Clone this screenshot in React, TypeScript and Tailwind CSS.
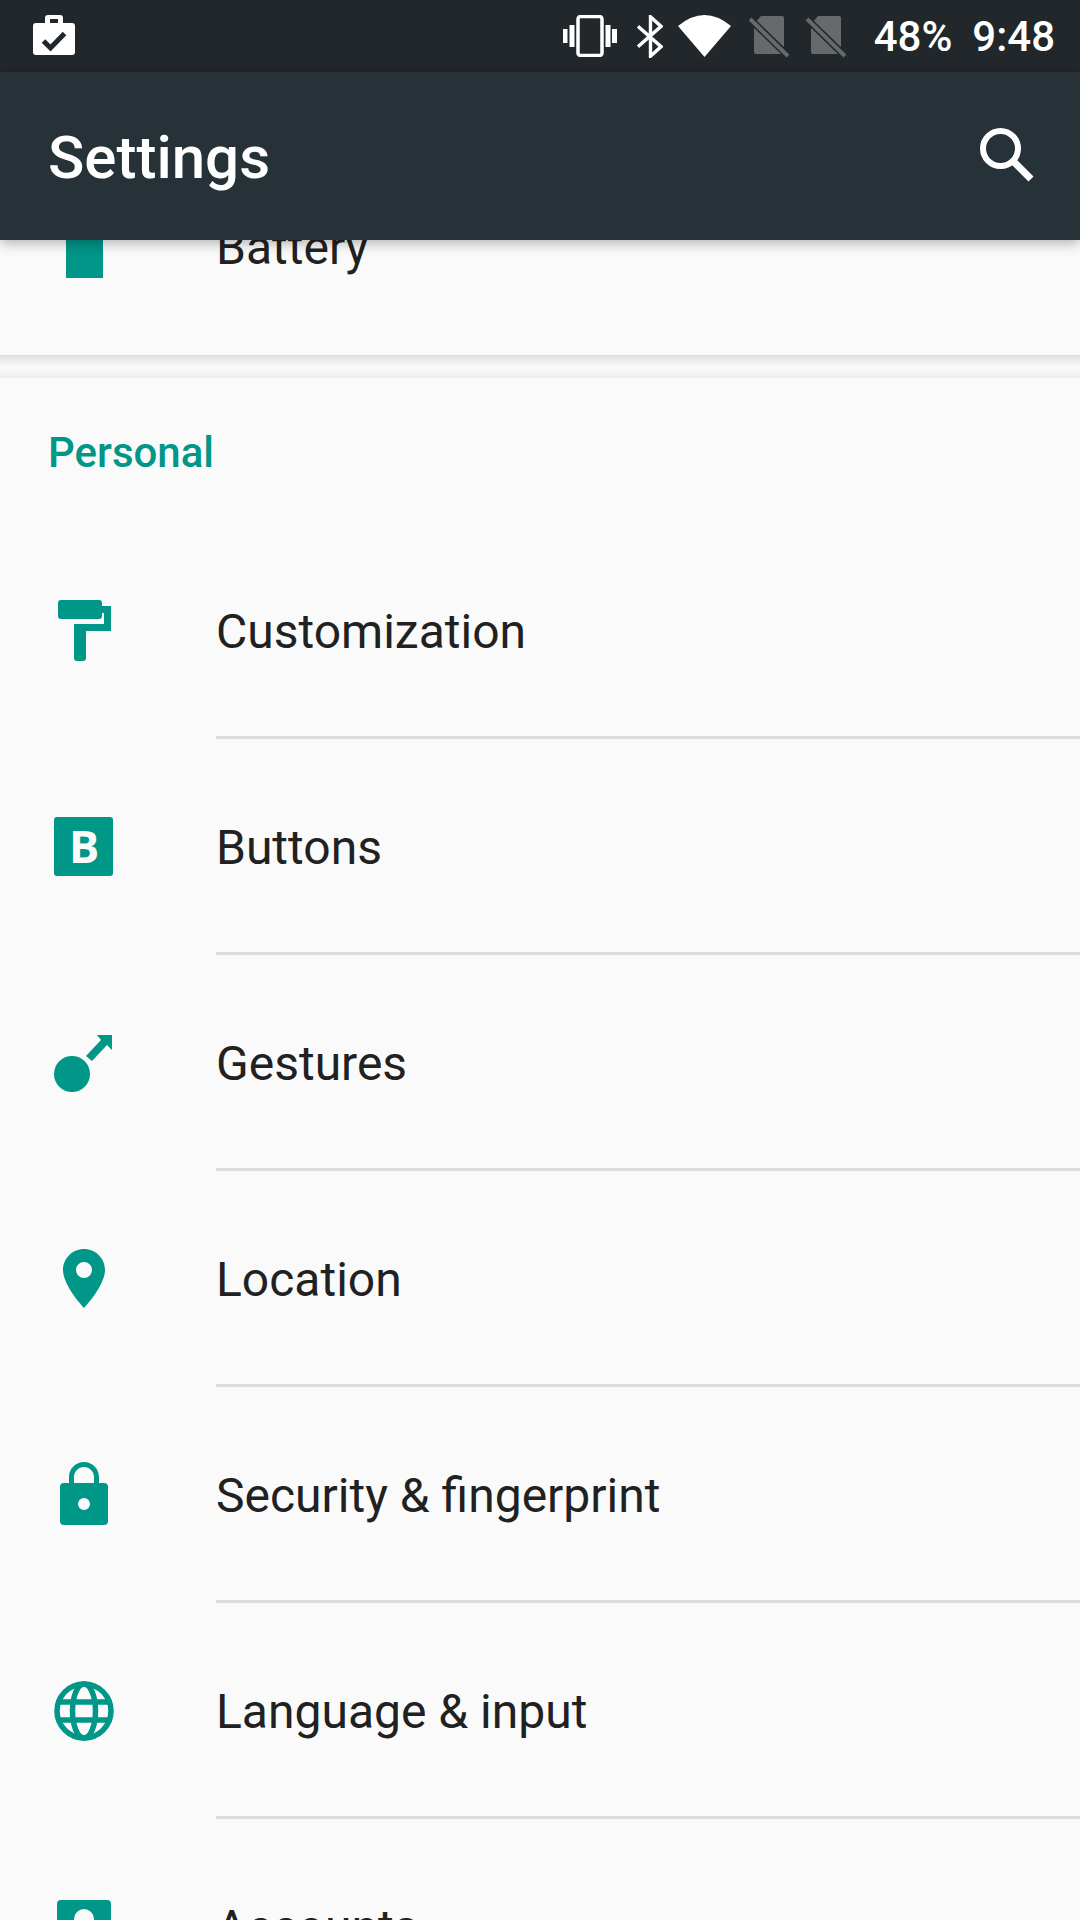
import type { ReactNode } from 'react';

const rows: { label: string; icon: ReactNode }[] = [
  {
    label: 'Customization',
    icon: (
      <>
        <rect x="10" y="6" width="44" height="19" rx="3" />
        <path d="M54 12h9v25H38v27a3 3 0 0 1-3 3h-6a3 3 0 0 1-3-3V30h30V19h-2z" />
      </>
    ),
  },
  {
    label: 'Buttons',
    icon: (
      <>
        <rect x="6" y="7" width="59" height="59" rx="3" />
        <text x="36" y="53" textAnchor="middle" fontSize="45" fontWeight="700" fill="#fafafa" fontFamily="'Open Sans', sans-serif">
          B
        </text>
      </>
    ),
  },
  {
    label: 'Gestures',
    icon: (
      <>
        <circle cx="24" cy="48" r="18" />
        <path d="M49 9h15v15l-5-5-15 16-6-5 15-16z" />
      </>
    ),
  },
  {
    label: 'Location',
    icon: (
      <path
        fillRule="evenodd"
        d="M36 7C24.4 7 15 16.4 15 28c0 15.75 21 38 21 38s21-22.25 21-38C57 16.4 47.6 7 36 7zm0 13a8 8 0 1 1 0 16 8 8 0 0 1 0-16z"
      />
    ),
  },
  {
    label: 'Security & fingerprint',
    icon: (
      <path
        fillRule="evenodd"
        d="M36 4c-8.3 0-15 6.7-15 15v6h-5a4 4 0 0 0-4 4v34a4 4 0 0 0 4 4h40a4 4 0 0 0 4-4V29a4 4 0 0 0-4-4h-5v-6c0-8.3-6.700-15-15-15zm0 5c5.500 0 10 4.500 10 10v6H26v-6c0-5.500 4.500-10 10-10zm0 31a6 6 0 1 1 0 12 6 6 0 0 1 0-12z"
      />
    ),
  },
  {
    label: 'Language & input',
    icon: (
      <g fill="none" stroke="#009688" strokeWidth="5.5">
        <circle cx="36" cy="37" r="27" />
        <ellipse cx="36" cy="37" rx="11.500" ry="27" />
        <path d="M10 28h52M10 46h52" />
      </g>
    ),
  },
  {
    label: 'Accounts',
    icon: (
      <path
        fillRule="evenodd"
        d="M13 10h46a4 4 0 0 1 4 4v46a4 4 0 0 1-4 4H13a4 4 0 0 1-4-4V14a4 4 0 0 1 4-4zm23 9a10 10 0 1 0 0 20 10 10 0 0 0 0-20z"
      />
    ),
  },
];

function SimOff() {
  return (
    <svg width="40" height="43" viewBox="0 0 40 43" fill="#666a6c">
      <path d="M12 1h21a2 2 0 0 1 2 2v34a2 2 0 0 1-2 2H7a2 2 0 0 1-2-2V9z" />
      <path d="M1 4l38 37" stroke="#21272b" strokeWidth="7" />
      <path d="M1 4l38 37" stroke="#666a6c" strokeWidth="4" />
    </svg>
  );
}

function StatusBar() {
  return (
    <div className="h-[72px] shrink-0 bg-[#21272b] flex items-center justify-between pl-[33px] pr-[25px] text-white">
      <svg width="42" height="42" viewBox="0 0 42 42" fill="#fff">
        <path
          fillRule="evenodd"
          d="M15 0h12a3 3 0 0 1 3 3v5h9a3 3 0 0 1 3 3v26a3 3 0 0 1-3 3H3a3 3 0 0 1-3-3V11a3 3 0 0 1 3-3h9V3a3 3 0 0 1 3-3zm2 4v4h8V4z"
        />
        <path d="M10.500 26l7 7 14-14.500" fill="none" stroke="#21272b" strokeWidth="5" />
      </svg>
      <div className="flex items-center">
        <svg width="54" height="42" viewBox="0 0 54 42" fill="#fff">
          <rect x="15" y="1.500" width="24" height="39" rx="2.500" fill="none" stroke="#fff" strokeWidth="3.500" />
          <rect x="0" y="14" width="4.500" height="14" />
          <rect x="6.500" y="10" width="5" height="22" />
          <rect x="42.500" y="10" width="5" height="22" />
          <rect x="49" y="14" width="5" height="14" />
        </svg>
        <svg className="ml-[20px]" width="26" height="43" viewBox="0 0 27 43" fill="none" stroke="#fff" strokeWidth="3.500">
          <path d="M1 11l24 21-11 10V1l11 10L1 32" />
        </svg>
        <svg className="ml-[15px]" width="53" height="42" viewBox="0 0 53 42" fill="#fff">
          <path d="M0 11Q26.500-11 53 11L26.500 42z" />
        </svg>
        <div className="ml-[18px]">
          <SimOff />
        </div>
        <div className="ml-[17px]">
          <SimOff />
        </div>
        <span className="ml-[28px] pt-[2px] text-[42px] leading-none font-medium">48%</span>
        <span className="ml-[20px] pt-[2px] text-[42px] leading-none font-medium">9:48</span>
      </div>
    </div>
  );
}

function SettingRow({ label, icon }: { label: string; icon: ReactNode }) {
  return (
    <div className="h-[216px] shrink-0 flex">
      <div className="w-[216px] shrink-0 flex items-center pl-[48px] pb-[2px]">
        <svg width="72" height="72" viewBox="0 0 72 72" fill="#009688">
          {icon}
        </svg>
      </div>
      <div className="flex-1 min-w-0 flex items-center border-b-[3px] border-[#dcdcdc] pt-[5px]">
        <span className="text-[48px] leading-none text-[#212121]">{label}</span>
      </div>
    </div>
  );
}

export default function App() {
  return (
    <div className="w-[1080px] h-[1920px] overflow-hidden flex flex-col bg-[#fafafa] font-['Roboto',sans-serif]">
      <div className="relative z-10 shrink-0">
        <StatusBar />
        <div className="h-[168px] bg-[#263238] flex items-center justify-between pl-[48px] pr-[42px] shadow-[0_3px_12px_rgba(0,0,0,0.3)]">
          <span className="pt-[3px] text-[60px] leading-none font-medium text-white">Settings</span>
          <svg width="60" height="60" viewBox="0 0 60 60" fill="none" stroke="#fff">
            <circle cx="22.500" cy="22.500" r="17.500" strokeWidth="6" />
            <path d="M35 35l18 18" strokeWidth="7" />
          </svg>
        </div>
      </div>

      <div className="flex-1 min-h-0 overflow-hidden">
        {/* list is scrolled, Battery row sits under the app bar */}
        <div className="-mt-[101px] flex flex-col">
          <div className="h-[216px] shrink-0 flex">
            <div className="w-[216px] shrink-0 flex items-center pl-[48px]">
              <svg width="72" height="72" viewBox="0 0 72 72" fill="#009688">
                <rect x="18" y="0" width="37" height="67" />
              </svg>
            </div>
            <div className="flex-1 flex items-center pt-[2px]">
              <span className="text-[48px] leading-none text-[#212121]">Battery</span>
            </div>
          </div>

          <div className="h-[23px] shrink-0 bg-linear-to-b from-[#dedede] via-[#fafafa] to-[#efefef]" />

          <div className="h-[145px] shrink-0 flex items-center pl-[48px] pt-[5px]">
            <span className="text-[42px] leading-none font-medium text-[#009688]">Personal</span>
          </div>

          {rows.map((row) => (
            <SettingRow key={row.label} label={row.label} icon={row.icon} />
          ))}
        </div>
      </div>
    </div>
  );
}
